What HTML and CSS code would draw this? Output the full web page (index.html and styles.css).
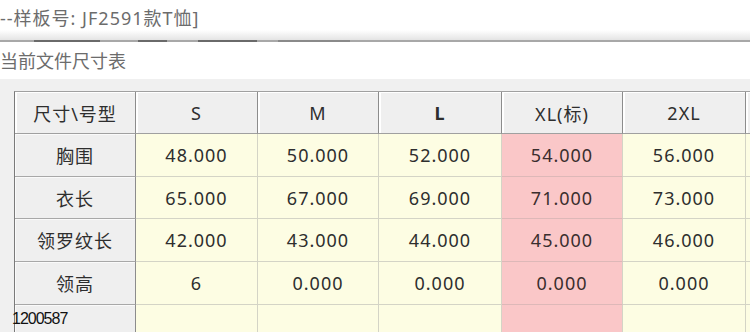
FILE: index.html
```html
<!DOCTYPE html>
<html lang="zh">
<head>
<meta charset="utf-8">
<link rel="stylesheet" href="styles.css">
</head>
<body>
<div class="app">
  <div class="title">--样板号: JF2591款T恤]</div>
  <div class="rule">
    <span class="ghost g1"></span><span class="ghost g2"></span><span class="ghost g3"></span><span class="ghost g4"></span>
  </div>
  <div class="subtitle">当前文件尺寸表</div>
  <div class="panel">
    <div class="grid">
      <div class="cell hd">尺寸\号型</div>
      <div class="cell hd">S</div>
      <div class="cell hd">M</div>
      <div class="cell hd bold">L</div>
      <div class="cell hd">XL(标)</div>
      <div class="cell hd">2XL</div>
      <div class="cell hd"></div>

      <div class="cell rh">胸围</div>
      <div class="cell d">48.000</div>
      <div class="cell d">50.000</div>
      <div class="cell d">52.000</div>
      <div class="cell d xl">54.000</div>
      <div class="cell d">56.000</div>
      <div class="cell d"></div>

      <div class="cell rh">衣长</div>
      <div class="cell d">65.000</div>
      <div class="cell d">67.000</div>
      <div class="cell d">69.000</div>
      <div class="cell d xl">71.000</div>
      <div class="cell d">73.000</div>
      <div class="cell d"></div>

      <div class="cell rh">领罗纹长</div>
      <div class="cell d">42.000</div>
      <div class="cell d">43.000</div>
      <div class="cell d">44.000</div>
      <div class="cell d xl">45.000</div>
      <div class="cell d">46.000</div>
      <div class="cell d"></div>

      <div class="cell rh">领高</div>
      <div class="cell d">6</div>
      <div class="cell d">0.000</div>
      <div class="cell d">0.000</div>
      <div class="cell d xl">0.000</div>
      <div class="cell d">0.000</div>
      <div class="cell d"></div>

      <div class="cell rh"></div>
      <div class="cell d"></div>
      <div class="cell d"></div>
      <div class="cell d"></div>
      <div class="cell d xl"></div>
      <div class="cell d"></div>
      <div class="cell d"></div>
    </div>
  </div>
  <div class="tag">1200587</div>
</div>
</body>
</html>
```
FILE: styles.css
```css
html, body {
  margin: 0;
  padding: 0;
  background: #ffffff;
}
.app {
  position: relative;
  width: 750px;
  height: 332px;
  overflow: hidden;
  font-family: "Noto Sans", "Noto Sans CJK SC", sans-serif;
  font-size: 18px;
  letter-spacing: 1px;
  color: #2e2e2e;
}
.title {
  box-sizing: border-box;
  height: 30px;
  padding-top: 6px;
  line-height: 24px;
  color: #6c6c6c;
  white-space: nowrap;
}
.rule {
  box-sizing: border-box;
  height: 12px;
  background: linear-gradient(#ffffff, #e4e4e4);
  border-bottom: 2px solid #a8a8a8;
  display: flex;
  align-items: flex-end;
}
.ghost {
  display: block;
  height: 2px;
  background: #6a6a6a;
  margin-bottom: -2px;
}
.g1 { margin-left: 34px; width: 66px; }
.g2 { margin-left: 38px; width: 29px; }
.g3 { margin-left: 31px; width: 59px; }
.g4 { margin-left: 21px; width: 72px; background: #8a8a8a; }
.subtitle {
  box-sizing: border-box;
  height: 37px;
  padding-top: 7px;
  line-height: 24px;
  letter-spacing: 0;
  color: #6c6c6c;
  white-space: nowrap;
}
.panel {
  background: #f0f0f0;
  padding: 12px 0 0 14px;
  height: 300px;
}
.grid {
  display: grid;
  grid-template-columns: 121px 122px 121px 123px 121px 123px 40px;
  grid-template-rows: 42px 43px 42px 43px 43px 43px;
  border-top: 1px solid #a0a0a0;
  border-left: 1px solid #7a7a7a;
}
.cell {
  box-sizing: border-box;
  display: flex;
  align-items: center;
  justify-content: center;
  border-right: 1px solid #d4d4c6;
  border-bottom: 1px solid #d4d4c6;
  white-space: nowrap;
}
.hd {
  background: #efefef;
  border-right-color: #8c8c8c;
  border-bottom-color: #a0a0a0;
  box-shadow: inset 2px 1px 0 #ffffff;
  color: #2e2e2e;
}
.bold {
  font-weight: 700;
}
.rh {
  background: #efefef;
  border-right-color: #8c8c8c;
  border-bottom-color: #a8a8a8;
  box-shadow: inset 1px 1px 0 #fafafa;
  color: #2e2e2e;
}
.d {
  background: #fdfde3;
  color: #2e2e2e;
}
.xl {
  background: #fac7c8;
  border-bottom-color: #ddb8b8;
  color: #3a2e2e;
}
.tag {
  position: absolute;
  left: 12px;
  top: 309px;
  font-family: "Liberation Sans", sans-serif;
  font-size: 16px;
  letter-spacing: -1px;
  color: #111111;
  line-height: 20px;
}
```
